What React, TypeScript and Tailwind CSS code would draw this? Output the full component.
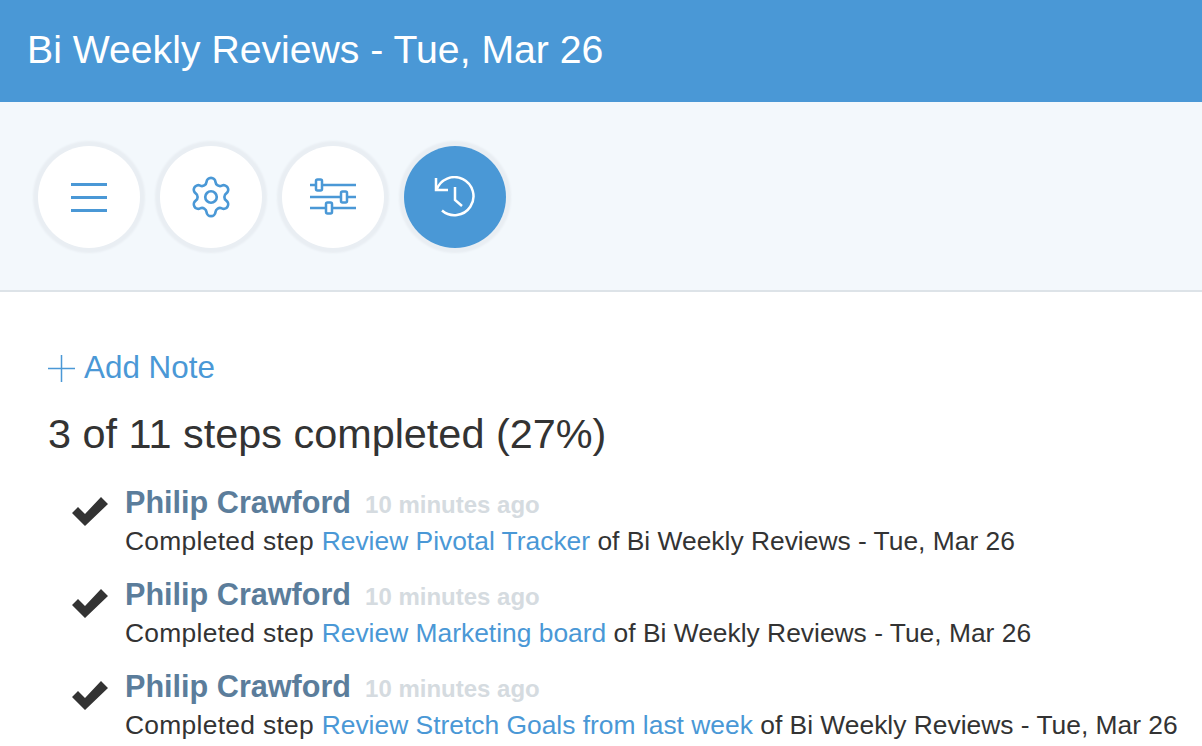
import React from "react";
import { Settings } from "lucide-react";

const activity = [
  { step: "Review Pivotal Tracker" },
  { step: "Review Marketing board" },
  { step: "Review Stretch Goals from last week" },
];

const MenuIcon = () => (
  <svg width="40" height="32" viewBox="0 0 40 32" fill="none" stroke="#4a98d6" strokeWidth="3">
    <path d="M2 3.5h36M2 16.5h36M2 29.5h36" />
  </svg>
);

const SlidersIcon = () => (
  <svg width="48" height="40" viewBox="0 0 48 40" fill="none" stroke="#4a98d6" strokeWidth="2.5">
    <path d="M1 8h46M1 20h46M1 31h46" />
    <rect x="7" y="2.5" width="6" height="11" rx="1.5" fill="#fff" />
    <rect x="32" y="14.5" width="6" height="11" rx="1.5" fill="#fff" />
    <rect x="17" y="25.5" width="6" height="11" rx="1.5" fill="#fff" />
  </svg>
);

const HistoryIcon = () => (
  <svg width="42" height="42" viewBox="0 0 42 42" fill="none" stroke="#fff" strokeWidth="2.5">
    <path d="M2 2v12h12" />
    <path d="M2.5 14A19 19 0 1 1 8 34.5" />
    <path d="M21 11v13l7 6" />
  </svg>
);

const CheckIcon = () => (
  <svg width="36" height="30" viewBox="0 0 36 30" fill="#333">
    <path d="M0 17l6-6 7 7L29 1l7 7-23 22z" />
  </svg>
);

const CircleButton = ({ active, children }: { active?: boolean; children: React.ReactNode }) => (
  <div
    className={`w-[102px] h-[102px] rounded-full shadow-[0_0_2px_5px_#e9eef3] flex items-center justify-center ${
      active ? "bg-[#4a98d6]" : "bg-white"
    }`}
  >
    {children}
  </div>
);

export default function App() {
  return (
    <div className="w-[1202px] h-[746px] overflow-hidden bg-white font-['Liberation_Sans',sans-serif] text-[#333]">
      <div className="h-[102px] bg-[#4a98d6] pl-[27px] pb-[2px] flex items-center text-white text-[39.2px]">
        Bi Weekly Reviews - Tue, Mar 26
      </div>
      <div className="h-[190px] bg-[#f3f8fc] border-b-2 border-[#dde3e8] pl-[38px] pt-[44px] flex gap-[20px] items-start">
        <CircleButton><MenuIcon /></CircleButton>
        <CircleButton><Settings size={46} strokeWidth={1.4} color="#4a98d6" /></CircleButton>
        <CircleButton><SlidersIcon /></CircleButton>
        <CircleButton active><HistoryIcon /></CircleButton>
      </div>
      <div className="pl-[48px] pt-[56px]">
        <div className="flex items-center gap-[9px] text-[#4a98d6] text-[31.4px] leading-[40px]">
          <svg width="27" height="27" viewBox="0 0 27 27" stroke="#4a98d6" strokeWidth="1.5">
            <path d="M13.5 0v27M0 13.5h27" />
          </svg>
          Add Note
        </div>
        <h2 className="mt-[24px] text-[41.4px] leading-[44px]">3 of 11 steps completed (27%)</h2>
        <div className="mt-[27px] flex flex-col">
          {activity.map((item) => (
            <div key={item.step} className="h-[92px] flex">
              <div className="w-[77px] pl-[24px] pt-[13px]">
                <CheckIcon />
              </div>
              <div>
                <div className="flex items-baseline gap-[14px] h-[38px]">
                  <span className="text-[30.6px] leading-[38px] font-bold text-[#5b7d9b]">Philip Crawford</span>
                  <span className="text-[24px] font-bold text-[#d5dbe0]">10 minutes ago</span>
                </div>
                <div className="text-[26.4px] leading-[40px] whitespace-nowrap">
                  <span className="tracking-[0.3px]">Completed step </span>
                  <span className="text-[#4a98d6]">{item.step}</span> of Bi Weekly Reviews - Tue, Mar 26
                </div>
              </div>
            </div>
          ))}
        </div>
      </div>
    </div>
  );
}
